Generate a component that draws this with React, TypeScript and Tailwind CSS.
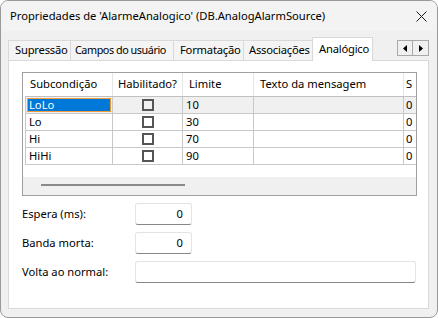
import React from 'react';

const tabs = [
  { label: 'Supressão', cls: 'w-[62px] pl-[6px]' },
  { label: 'Campos do usuário', cls: 'w-[103px] pl-[4px] tracking-[-0.45px] text-[10.8px]' },
  { label: 'Formatação', cls: 'w-[70px] pl-[6px]' },
  { label: 'Associações', cls: 'w-[69px] pl-[5px]' },
];

const rows = [
  { name: 'LoLo', limit: '10' },
  { name: 'Lo', limit: '30' },
  { name: 'Hi', limit: '70' },
  { name: 'HiHi', limit: '90' },
];

const Checkbox = () => (
  <div className="w-[12px] h-[12px] border-2 border-[#555555]" />
);

const Field = ({ label, value, wide }: { label: string; value?: string; wide?: boolean }) => (
  <div className="flex items-center h-[22px]">
    <div className="w-[113px] shrink-0">{label}</div>
    <div
      className={
        'h-[22px] shrink-0 bg-white border border-[#e3e3e3] border-b-[#868686] rounded-[3px] flex items-center justify-end pr-[8px] ' +
        (wide ? 'w-[281px]' : 'w-[57px]')
      }
    >
      {value}
    </div>
  </div>
);

export default function App() {
  return (
    <div className="w-[438px] h-[318px] bg-[#f0f0f0] border border-[#9a9a9a] rounded-[8px] overflow-hidden flex flex-col text-[11.2px] text-black font-[family-name:Noto_Sans,sans-serif]">
      {/* title bar */}
      <div className="h-[30px] shrink-0 bg-[#f3f3f3] flex items-center justify-between pl-[9px] pr-[10px]">
        <span>Propriedades de 'AlarmeAnalogico' (DB.AnalogAlarmSource)</span>
        <svg width="11" height="11" viewBox="0 0 11 11">
          <path d="M0.5 0.5 L10.5 10.5 M10.5 0.5 L0.5 10.5" stroke="#1a1a1a" strokeWidth="1" />
        </svg>
      </div>

      <div className="px-[7px] pt-[6px] flex flex-col">
        {/* tabs */}
        <div className="flex items-end h-[23px] tracking-[-0.2px]">
          {tabs.map((t) => (
            <div
              key={t.label}
              className={'h-[20px] shrink-0 flex items-center border-t border-l border-[#d9d9d9] bg-[#f4f4f4] whitespace-nowrap ' + t.cls}
            >
              {t.label}
            </div>
          ))}
          <div className="h-[24px] w-[61px] shrink-0 -mb-px pl-[6px] flex items-center border border-b-0 border-[#d9d9d9] bg-white relative z-10 whitespace-nowrap">
            Analógico
          </div>
          <div className="ml-auto mr-[1px] mb-[4px] flex">
            <div className="w-[16px] h-[16px] border border-[#a8a8a8] bg-[#f0f0f0] flex items-center justify-center">
              <svg width="4" height="7" viewBox="0 0 4 7"><path d="M4 0 L0 3.5 L4 7 Z" fill="#000" /></svg>
            </div>
            <div className="w-[16px] h-[16px] border border-l-0 border-[#a8a8a8] bg-[#f0f0f0] flex items-center justify-center">
              <svg width="4" height="7" viewBox="0 0 4 7"><path d="M0 0 L4 3.5 L0 7 Z" fill="#000" /></svg>
            </div>
          </div>
        </div>

        {/* panel */}
        <div className="h-[249px] w-[421px] border border-[#d9d9d9] bg-white pt-[11px] pl-[13px]">
          {/* grid */}
          <div className="w-[395px] h-[124px] border border-[#a0a0a0] overflow-hidden flex flex-col">
            <div className="pl-[2px] flex flex-col">
              <div className="flex h-[24px] border-b border-[#c0c0c0] items-center whitespace-nowrap">
                <div className="w-[88px] shrink-0 h-full flex items-center pl-[5px] border-r border-[#e5e5e5]">Subcondição</div>
                <div className="w-[70px] shrink-0 h-full flex items-center justify-center border-r border-[#e5e5e5]">Habilitado?</div>
                <div className="w-[71px] shrink-0 h-full flex items-center pl-[6px] border-r border-[#e5e5e5]">Limite</div>
                <div className="w-[150px] shrink-0 h-full flex items-center pl-[6px] border-r border-[#e5e5e5]">Texto da mensagem</div>
                <div className="w-[40px] shrink-0 h-full flex items-center pl-[2px]">S</div>
              </div>
              {rows.map((r, i) => (
                <div
                  key={r.name}
                  className={'flex h-[17px] border-b border-l border-[#c8c8c8] ' + (i === 0 ? 'bg-[#f0f0f0]' : 'bg-white')}
                >
                  <div className="w-[87px] shrink-0 h-full border-r border-[#c8c8c8] p-px">
                    {i === 0 ? (
                      <div className="h-full bg-[#0078d7] border border-[#f29a3c] text-white flex items-center pl-[1px]">{r.name}</div>
                    ) : (
                      <div className="h-full flex items-center pl-[2px]">{r.name}</div>
                    )}
                  </div>
                  <div className="w-[70px] shrink-0 h-full border-r border-[#c8c8c8] flex items-center justify-center">
                    <Checkbox />
                  </div>
                  <div className="w-[71px] shrink-0 h-full border-r border-[#c8c8c8] flex items-center pl-[3px]">{r.limit}</div>
                  <div className="w-[150px] shrink-0 h-full border-r border-[#c8c8c8]" />
                  <div className="w-[40px] shrink-0 h-full flex items-center pl-[2px]">0</div>
                </div>
              ))}
            </div>
            <div className="h-[12px] shrink-0" />
            <div className="h-[18px] shrink-0 bg-[#f0f0f0] pt-[7px] pl-[18px]">
              <div className="w-[144px] h-[2px] bg-[#8a8a8a]" />
            </div>
          </div>

          {/* fields */}
          <div className="flex flex-col gap-[7px] mt-[7px]">
            <Field label="Espera (ms):" value="0" />
            <Field label="Banda morta:" value="0" />
            <Field label="Volta ao normal:" wide />
          </div>
        </div>
      </div>
    </div>
  );
}
